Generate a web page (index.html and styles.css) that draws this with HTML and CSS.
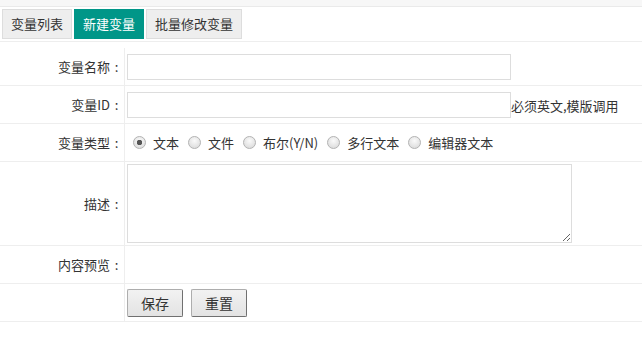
FILE: index.html
```html
<!DOCTYPE html>
<html lang="zh-CN">
<head>
  <meta charset="UTF-8">
  <title>新建变量</title>
  <link rel="stylesheet" href="styles.css">
</head>
<body>
  <div class="topbar"></div>

  <div class="tabs">
    <a href="#" class="tab">变量列表</a>
    <a href="#" class="tab active">新建变量</a>
    <a href="#" class="tab">批量修改变量</a>
  </div>

  <table class="form-table">
    <tr>
      <th>变量名称<span class="colon">:</span></th>
      <td><input type="text" class="txt"></td>
    </tr>
    <tr>
      <th>变量ID<span class="colon">:</span></th>
      <td><input type="text" class="txt"><span class="tip">必须英文,模版调用</span></td>
    </tr>
    <tr>
      <th>变量类型<span class="colon">:</span></th>
      <td>
        <div class="radios">
          <label><input type="radio" name="vtype" checked>文本</label>
          <label><input type="radio" name="vtype">文件</label>
          <label><input type="radio" name="vtype">布尔(Y/N)</label>
          <label><input type="radio" name="vtype">多行文本</label>
          <label><input type="radio" name="vtype">编辑器文本</label>
        </div>
      </td>
    </tr>
    <tr class="tall">
      <th>描述<span class="colon">:</span></th>
      <td><textarea class="desc"></textarea></td>
    </tr>
    <tr>
      <th>内容预览<span class="colon">:</span></th>
      <td></td>
    </tr>
    <tr>
      <th></th>
      <td>
        <div class="actions">
          <button class="btn">保存</button>
          <button class="btn">重置</button>
        </div>
      </td>
    </tr>
  </table>
</body>
</html>
```

FILE: styles.css
```css
body { margin: 0; padding: 0; background: #fff; color: #333; font-family: "Microsoft YaHei", "Noto Sans CJK SC", "Liberation Sans", sans-serif; font-size: 13px; }
.topbar { height: 6px; background: #f7f7f7; border-bottom: 1px solid #eaeaea; }
.tabs { display: flex; gap: 2px; padding: 2px 0 0 2px; height: 32px; border-bottom: 1px solid #eee; }
.tab { display: block; height: 28px; line-height: 28px; padding: 0 8px; background: #eee; border: 1px solid #ddd; color: #333; text-decoration: none; }
.tab.active { background: #009688; border-color: #009688; color: #fff; }
.form-table { width: 100%; border-collapse: collapse; margin-top: 6px; }
.form-table th, .form-table td { border-bottom: 1px solid #eee; height: 37px; padding: 0; vertical-align: middle; }
.form-table th { width: 123px; padding-right: 1px; text-align: right; font-weight: normal; border-right: 1px solid #eee; }
.form-table td { padding-left: 2px; }
.form-table tr.tall td, .form-table tr.tall th { height: 83px; }
.colon { display: inline-block; width: 13px; text-align: center; }
.txt { width: 384px; height: 26px; box-sizing: border-box; border: 1px solid #ddd; padding: 0 4px; vertical-align: middle; font: inherit; }
.tip { vertical-align: middle; }
.radios { display: flex; align-items: center; padding-left: 6px; }
.radios label { display: flex; align-items: center; gap: 7px; margin-right: 9px; }
.radios input { appearance: none; margin: 0; width: 13px; height: 13px; border: 1px solid #b4b4b4; border-radius: 50%; background: radial-gradient(circle at 50% 35%, #fafafa, #d6d6d6); box-sizing: border-box; }
.radios input:checked { background: radial-gradient(circle, #555 0 2.5px, transparent 3px), radial-gradient(circle at 50% 35%, #fafafa, #d6d6d6); }
.desc { display: block; width: 445px; height: 79px; box-sizing: border-box; border: 1px solid #ddd; margin: 2px 0; resize: both; font: inherit; }
.actions { display: flex; gap: 8px; }
.btn { height: 28px; width: 56px; padding: 0; background: linear-gradient(#f2f2f2, #e3e3e3); border: 1px solid #adadad; border-right-color: #707070; border-bottom-color: #707070; border-radius: 2px; color: #333; font: inherit; font-size: 14px; cursor: pointer; }
.btn:hover { background: #ddd; }
```
